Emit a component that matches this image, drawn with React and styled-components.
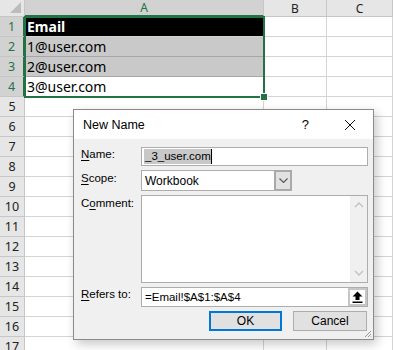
import styled, { createGlobalStyle } from "styled-components";

const rows = Array.from({ length: 17 }, (_, i) => i + 1);
const cols = ["A", "B", "C"];
const data = {
  1: { text: "Email", kind: "head" },
  2: { text: "1@user.com", kind: "gray" },
  3: { text: "2@user.com", kind: "gray" },
  4: { text: "3@user.com", kind: "plain" },
};

const GlobalStyle = createGlobalStyle`
  html, body { margin: 0; padding: 0; background: #fff; }
  body { font-family: "Noto Sans", "Open Sans", sans-serif; overflow: hidden; }
`;

const App = () => {
  return (
    <Page>
      <GlobalStyle />
      <Sheet>
        <Corner>
          <CornerTriangle />
        </Corner>
        {cols.map((c) => (
          <ColHeader key={c} selected={c === "A"}>
            {c}
          </ColHeader>
        ))}
        {rows.map((r) => (
          <Row key={r} r={r} />
        ))}
        <Selection>
          <FillHandle />
        </Selection>
      </Sheet>

      <Dialog>
        <TitleBar>
          <Title>New Name</Title>
          <TitleButtons>
            <Help>?</Help>
            <CloseIcon viewBox="0 0 12 12">
              <path d="M1 1 L11 11 M11 1 L1 11" stroke="#111" strokeWidth="1" fill="none" />
            </CloseIcon>
          </TitleButtons>
        </TitleBar>
        <Body>
          <Form>
            <Label>
              <u>N</u>ame:
            </Label>
            <TextBox>
              <Selected>_3_user.com</Selected>
              <Caret />
            </TextBox>

            <Label>
              <u>S</u>cope:
            </Label>
            <Select>
              <FieldText size={12}>Workbook</FieldText>
              <DropButton>
                <svg width="9" height="5" viewBox="0 0 9 5">
                  <path d="M0.5 0.5 L4.5 4.5 L8.5 0.5" stroke="#555" strokeWidth="1.1" fill="none" />
                </svg>
              </DropButton>
            </Select>

            <Label top>
              C<u>o</u>mment:
            </Label>
            <TextArea>
              <ScrollBar>
                <svg width="10" height="6" viewBox="0 0 10 6">
                  <path d="M1 5 L5 1 L9 5" stroke="#c2c2c2" strokeWidth="1.4" fill="none" />
                </svg>
                <svg width="10" height="6" viewBox="0 0 10 6">
                  <path d="M1 1 L5 5 L9 1" stroke="#c2c2c2" strokeWidth="1.4" fill="none" />
                </svg>
              </ScrollBar>
            </TextArea>

            <Label>
              <u>R</u>efers to:
            </Label>
            <RefBox>
              <FieldText size={11.5}>=Email!$A$1:$A$4</FieldText>
              <RefButton>
                <svg width="11" height="12" viewBox="0 0 11 12">
                  <path d="M5.5 0.5 L10.5 5.5 L7.5 5.5 L7.5 9 L3.5 9 L3.5 5.5 L0.5 5.5 Z" fill="#000" />
                  <rect x="0.5" y="10.5" width="10" height="1.5" fill="#000" />
                </svg>
              </RefButton>
            </RefBox>
          </Form>
          <Buttons>
            <Button primary>OK</Button>
            <Button>Cancel</Button>
          </Buttons>
        </Body>
        <Grip viewBox="0 0 8 8">
          <path d="M7 1 L1 7 M7 4 L4 7 M7 6.5 L6.5 7" stroke="#9a9a9a" strokeWidth="1" />
        </Grip>
      </Dialog>
    </Page>
  );
};

const Row = ({ r }) => {
  const cell = data[r];
  return (
    <>
      <RowHeader selected={r <= 4}>{r}</RowHeader>
      <Cell kind={cell ? cell.kind : "plain"}>{cell ? cell.text : ""}</Cell>
      <Cell kind="plain" />
      <Cell kind="plain" />
    </>
  );
};

const Page = styled.div`
  position: relative;
  width: 393px;
  height: 350px;
  overflow: hidden;
  background: #fff;
`;

const Sheet = styled.div`
  position: relative;
  display: grid;
  grid-template-columns: 25px 239px 63px 66px;
  grid-template-rows: 17px repeat(17, 20px);
`;

const Corner = styled.div`
  position: relative;
  background: #e6e6e6;
  border-right: 1px solid #c6c6c6;
  border-bottom: 1px solid #c6c6c6;
  box-sizing: border-box;
`;

const CornerTriangle = styled.div`
  position: absolute;
  right: 3px;
  bottom: 3px;
  width: 0;
  height: 0;
  border-left: 11px solid transparent;
  border-bottom: 11px solid #bcbcbc;
`;

const ColHeader = styled.div`
  display: flex;
  align-items: center;
  justify-content: center;
  box-sizing: border-box;
  background: ${(p) => (p.selected ? "#d2d2d2" : "#e6e6e6")};
  color: ${(p) => (p.selected ? "#217346" : "#222")};
  border-right: 1px solid #c6c6c6;
  border-bottom: ${(p) => (p.selected ? "2px solid #217346" : "1px solid #c6c6c6")};
  font-size: 12px;
  font-family: "Noto Sans", sans-serif;
`;

const RowHeader = styled.div`
  display: flex;
  align-items: center;
  justify-content: center;
  box-sizing: border-box;
  background: ${(p) => (p.selected ? "#d2d2d2" : "#e6e6e6")};
  color: ${(p) => (p.selected ? "#217346" : "#222")};
  border-right: ${(p) => (p.selected ? "2px solid #217346" : "1px solid #c6c6c6")};
  border-bottom: 1px solid #c6c6c6;
  font-size: 12.5px;
`;

const Cell = styled.div`
  display: flex;
  align-items: center;
  box-sizing: border-box;
  padding: 0 2px;
  border-right: 1px solid #d4d4d4;
  border-bottom: 1px solid #d4d4d4;
  font-family: "Noto Sans", "Open Sans", sans-serif;
  font-size: 14px;
  font-weight: ${(p) => (p.kind === "head" ? 700 : 400)};
  background: ${(p) => (p.kind === "head" ? "#000" : p.kind === "gray" ? "#c9c9c9" : "#fff")};
  color: ${(p) => (p.kind === "head" ? "#fff" : "#000")};
  border-bottom-color: ${(p) => (p.kind === "gray" ? "#a6a6a6" : "#d4d4d4")};
  white-space: nowrap;
`;

const Selection = styled.div`
  position: absolute;
  left: 24px;
  top: 16px;
  width: 241px;
  height: 82px;
  border: 2px solid #217346;
  box-sizing: border-box;
  pointer-events: none;
`;

const FillHandle = styled.div`
  position: absolute;
  right: -5px;
  bottom: -5px;
  width: 6px;
  height: 6px;
  background: #217346;
  border: 1px solid #fff;
`;

const Dialog = styled.div`
  position: absolute;
  left: 73px;
  top: 109px;
  width: 301px;
  height: 231px;
  box-sizing: border-box;
  border: 1px solid #8a8a8a;
  background: #f0f0f0;
  box-shadow: 3px 4px 10px rgba(0, 0, 0, 0.22);
  display: flex;
  flex-direction: column;
  font-family: "Liberation Sans", Arial, sans-serif;
  font-size: 11px;
  color: #000;
`;

const TitleBar = styled.div`
  height: 29px;
  background: #fff;
  display: flex;
  align-items: center;
  justify-content: space-between;
  padding: 0 17px 0 9px;
`;

const Title = styled.div`
  font-size: 12.5px;
`;

const TitleButtons = styled.div`
  display: flex;
  align-items: center;
  gap: 35px;
`;

const Help = styled.div`
  font-size: 13px;
`;

const CloseIcon = styled.svg`
  width: 12px;
  height: 12px;
`;

const Body = styled.div`
  flex: 1;
  padding: 8px 5px 0 7px;
  display: flex;
  flex-direction: column;
  gap: 4px;
`;

const Form = styled.div`
  display: grid;
  grid-template-columns: 60px 227px;
  grid-template-rows: 19px 21px 88px 20px;
  row-gap: 4px;
`;

const Label = styled.div`
  display: flex;
  align-items: ${(p) => (p.top ? "flex-start" : "center")};
  padding-top: ${(p) => (p.top ? "2px" : "0")};
  margin-top: ${(p) => (p.top ? "0" : "-3px")};
  height: 100%;
  font-size: 11.5px;
  u {
    text-decoration: underline;
    text-underline-offset: 2px;
  }
`;

const TextBox = styled.div`
  box-sizing: border-box;
  border: 1px solid #adadad;
  background: #fff;
  display: flex;
  align-items: center;
  padding: 0 2px;
`;

const Selected = styled.span`
  background: #c8c8c8;
  font-size: 11.5px;
  line-height: 15px;
  padding-left: 1px;
`;

const Caret = styled.span`
  width: 1px;
  height: 15px;
  background: #000;
`;

const Select = styled.div`
  width: 151px;
  box-sizing: border-box;
  border: 1px solid #adadad;
  border-right: none;
  background: #fff;
  display: flex;
`;

const FieldText = styled.div`
  flex: 1;
  display: flex;
  align-items: center;
  padding: 0 3px;
  font-size: ${(p) => p.size}px;
`;

const DropButton = styled.div`
  width: 18px;
  margin: -1px 0;
  box-sizing: border-box;
  background: #e1e1e1;
  border: 2px solid #a9a9a9;
  display: flex;
  align-items: center;
  justify-content: center;
`;

const TextArea = styled.div`
  box-sizing: border-box;
  border: 1px solid #adadad;
  background: #fff;
  display: flex;
  justify-content: flex-end;
`;

const ScrollBar = styled.div`
  width: 17px;
  background: #f0f0f0;
  display: flex;
  flex-direction: column;
  justify-content: space-between;
  align-items: center;
  padding: 6px 0;
`;

const RefBox = styled.div`
  box-sizing: border-box;
  border: 1px solid #adadad;
  background: #fff;
  display: flex;
  align-items: center;
`;

const RefButton = styled.div`
  width: 19px;
  height: 18px;
  box-sizing: border-box;
  background: #fff;
  border: 2px solid #c6c6c6;
  display: flex;
  align-items: center;
  justify-content: center;
`;

const Buttons = styled.div`
  display: flex;
  justify-content: flex-end;
  gap: 11px;
  padding-right: 1px;
`;

const Button = styled.div`
  width: ${(p) => (p.primary ? "73px" : "74px")};
  height: 20px;
  box-sizing: border-box;
  background: #e1e1e1;
  border: ${(p) => (p.primary ? "2px solid #0078d7" : "1px solid #adadad")};
  display: flex;
  align-items: center;
  justify-content: center;
  font-size: 12px;
`;

const Grip = styled.svg`
  position: absolute;
  right: 1px;
  bottom: 1px;
  width: 8px;
  height: 8px;
`;

export default App;
